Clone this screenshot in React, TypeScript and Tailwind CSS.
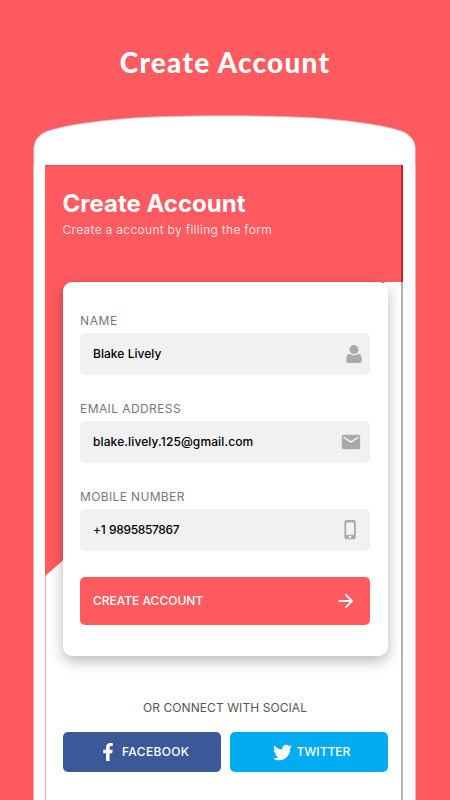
import type { ReactNode } from 'react'
import { MdArrowForward, MdEmail, MdPhoneIphone } from 'react-icons/md'
import { FaFacebookF, FaTwitter } from 'react-icons/fa'

interface FieldProps {
  label: string
  labelClass: string
  value: string
  valueClass: string
  icon: ReactNode
}

function PersonIcon() {
  return (
    <svg viewBox="0 0 16 18" className="h-[18px] w-4" fill="currentColor">
      <circle cx="8" cy="4.6" r="4.5" />
      <path d="M3.3 8.7C1.2 9.2.3 11.2.3 14.3V16c0 1.2.8 2 2 2h11.4c1.2 0 2-.8 2-2v-1.7c0-3.1-.9-5.1-3-5.6C11.5 9.6 9.9 10.2 8 10.2S4.500 9.600 3.300 8.700Z" />
    </svg>
  )
}

function Field({ label, labelClass, value, valueClass, icon }: FieldProps) {
  return (
    <div className="mb-[26px]">
      <p className={`h-4 text-xs leading-4 whitespace-nowrap text-[#777] ${labelClass}`}>{label}</p>
      <div className="mt-1 flex h-[42px] items-center justify-between rounded-[5px] bg-[#f1f1f1] pl-[13px] text-[#a9a9a9]">
        <span className={`text-xs font-medium whitespace-nowrap text-black ${valueClass}`}>{value}</span>
        {icon}
      </div>
    </div>
  )
}

/* Rounded top of the handset */
function PhoneCap() {
  return (
    <svg viewBox="0 0 383 50" className="block h-[50px] w-[383px] shrink-0">
      <path
        d="M.8 51V34C.8 25 6.5 19.5 13.5 16.5C28 11 60 6 100 3C130 1.200 165 .8 191.500 .8S253 1.200 283 3C323 6 355 11 369.500 16.500C376.500 19.500 382.300 25 382.300 34V51"
        fill="#fff"
        stroke="#d9b3b3"
        strokeWidth="0.8"
      />
    </svg>
  )
}

export default function App() {
  return (
    <div className="flex h-[800px] w-[450px] flex-col overflow-hidden bg-[#ff5a60] font-['Inter',sans-serif]">
      <h1 className="h-[115px] shrink-0 pt-[43px] text-center font-['Lato',sans-serif] text-[28px] leading-[38px] font-black tracking-[1.25px] text-white">
        Create Account
      </h1>

      <div className="ml-[33px] flex w-[383px] flex-1 flex-col">
        <PhoneCap />

        <div className="flex-1 border-x border-[#efb0b3] bg-white px-[11px]">
          <div className="relative h-full w-[358px] border-r-2 border-[#b8b0b2]">
            <div className="absolute top-0 bottom-0 left-0 w-px bg-[#ffa9ad]" />
            {/* Coral backdrop, cut away diagonally behind the form */}
            <div className="absolute top-0 -right-0.5 left-0 h-[411px] border-t border-[#e8474f] bg-[#ff5a60] [clip-path:polygon(0_0,100%_0,100%_117px,340px_117px,0_411px)]" />
            <div className="absolute top-0 -right-0.5 h-[117px] w-0.5 bg-[#c51d2b]" />

            <div className="relative pl-[17.5px]">
              <header className="h-[117px] pt-[23px] text-white">
                <h2 className="text-2xl leading-[31px] font-bold whitespace-nowrap">Create Account</h2>
                <p className="mt-[3px] text-xs leading-4 tracking-[0.28px] whitespace-nowrap text-[#ffdcdd]">Create a account by filling the form</p>
              </header>

              <form className="h-[374px] w-[325px] rounded-[9px] bg-white px-[17.5px] pt-[30.5px] shadow-[0_5px_14px_rgba(0,0,0,0.28)]">
                <Field
                  label="NAME"
                  labelClass="tracking-[0.6px]"
                  value="Blake Lively"
                  valueClass="tracking-[0.04px]"
                  icon={<span className="mr-2"><PersonIcon /></span>}
                />
                <Field
                  label="EMAIL ADDRESS"
                  labelClass="tracking-[0.42px]"
                  value="blake.lively.125@gmail.com"
                  valueClass="tracking-[0.12px]"
                  icon={<MdEmail className="mr-2 size-[22px]" />}
                />
                <Field
                  label="MOBILE NUMBER"
                  labelClass="tracking-[0.36px]"
                  value="+1 9895857867"
                  valueClass="tracking-[-0.36px] [word-spacing:1px]"
                  icon={<MdPhoneIphone className="mr-[9px] size-[21px]" />}
                />
                <button
                  type="button"
                  className="flex h-12 w-full items-center justify-between rounded-[5px] bg-[#ff5a60] pr-[13px] pl-[13px] text-xs font-medium text-white"
                >
                  <span>CREATE ACCOUNT</span>
                  <MdArrowForward className="size-[22px]" />
                </button>
              </form>

              <p className="mt-[43px] w-[325px] text-center text-xs leading-[17px] tracking-[0.08px] whitespace-nowrap text-[#555]">OR CONNECT WITH SOCIAL</p>
              <div className="mt-4 flex gap-[9px] text-xs font-medium text-white">
                <button type="button" className="flex h-10 w-[158px] items-center rounded-[5px] bg-[#3b5999] pl-[36.5px]">
                  <FaFacebookF className="size-[18px]" />
                  <span className="ml-[5px] tracking-[0.35px]">FACEBOOK</span>
                </button>
                <button type="button" className="flex h-10 w-[158px] items-center rounded-[5px] bg-[#03abf0] pl-[43px]">
                  <FaTwitter className="size-[19px]" />
                  <span className="ml-[5px]">TWITTER</span>
                </button>
              </div>
            </div>
          </div>
        </div>
      </div>
    </div>
  )
}
